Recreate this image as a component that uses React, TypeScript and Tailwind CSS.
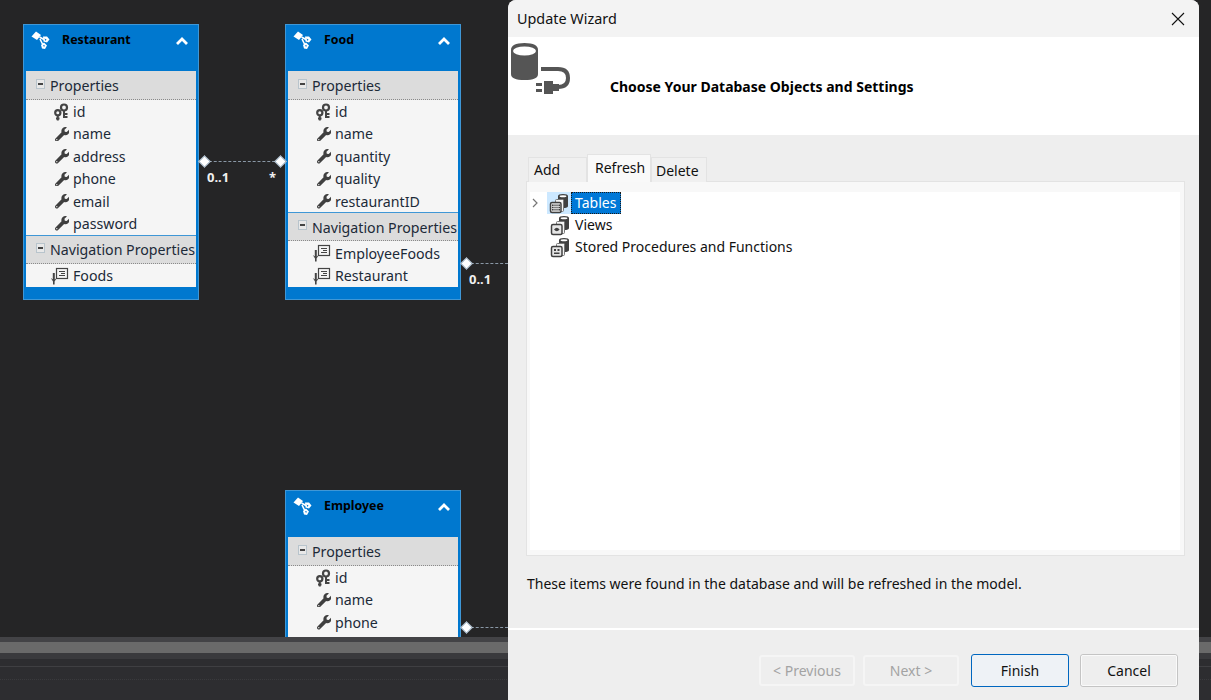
import React from "react";
import { FaWrench } from "react-icons/fa";

const font = { fontFamily: '"Noto Sans", "Open Sans", sans-serif' };

function EntityIcon() {
  return (
    <svg width="20" height="20" viewBox="0 0 20 20" className="shrink-0">
      <path d="M0.5 6.5 L5 1.5 L10 5 L6 10 Z" fill="#fff" />
      <path d="M8.5 7 L13 9.5 M9 9 L12 15" stroke="#fff" strokeWidth="1.6" fill="none" />
      <path d="M12 6.5 L16 6.5 L18.5 9.5 L16 12.5 L12.5 11.5 Z" fill="#fff" />
      <path d="M10 15 L13 12.5 L16 15.5 L14 19 L11 18.5 Z" fill="#fff" />
      <path d="M13.5 8.5 L15.5 9.5 L14.5 11 Z M12 15 L14 15.5 L13 17 Z" fill="#0078cf" />
    </svg>
  );
}

function Chevron() {
  return (
    <svg width="14" height="10" viewBox="0 0 14 10">
      <path d="M2 8 L7 3 L12 8" stroke="#fff" strokeWidth="2.8" fill="none" />
    </svg>
  );
}

function MinusBox() {
  return (
    <svg width="9" height="10" viewBox="0 0 9 10" className="shrink-0">
      <rect x="0.5" y="0.5" width="8" height="9" fill="#e8e8e8" stroke="#b8c4cc" />
      <rect x="2" y="4" width="5" height="2" fill="#444" />
    </svg>
  );
}

function KeyIcon() {
  return (
    <svg width="15" height="18" viewBox="0 0 15 18">
      <circle cx="10" cy="4.5" r="3" stroke="#444" strokeWidth="2.2" fill="none" />
      <path d="M10 8 V15 M10 11 H13.5 M10 14 H13.5" stroke="#444" strokeWidth="2" />
      <circle cx="3.8" cy="9.8" r="2.6" stroke="#444" strokeWidth="2.2" fill="none" />
      <path d="M3.8 12 V17.5 M2 15.5 H5.5" stroke="#444" strokeWidth="2" />
    </svg>
  );
}

function NavIcon() {
  return (
    <svg width="19" height="18" viewBox="0 0 19 18">
      <rect x="6.5" y="1.5" width="11" height="10" fill="#f5f5f5" stroke="#444" strokeWidth="1.2" />
      <path d="M9 4.5 H15 M11 6.5 H15 M9 8.5 H15" stroke="#444" />
      <path d="M3.8 6 V13" stroke="#444" strokeWidth="2" fill="none" />
      <path d="M0.8 11 L3 14.5 L3 17.5 L4.6 17.5 L4.6 14.5 L6.8 11 L3.8 13 Z" fill="#444" />
    </svg>
  );
}

type Row = { name: string; key?: boolean };

function Section({ title, rows, nav, first }: { title: string; rows: Row[]; nav?: boolean; first?: boolean }) {
  return (
    <div className={first ? "" : "border-t border-[#3f97d6]"}>
      <div className={`${first ? "h-[29px]" : "h-[28px]"} bg-[#dcdcdc] border-b border-dotted border-[#8a8a8a] flex items-center pl-[10px] gap-[5px] text-[14.2px] text-[#1c2a38] whitespace-nowrap`}>
        <span className="-mt-[3px] flex"><MinusBox /></span>
        <span className="mt-[1px]">{title}</span>
      </div>
      <div className="pt-[0.5px]">
        {rows.map((r) => (
          <div key={r.name} className="h-[22.4px] flex items-center text-[14.2px] text-[#1c2a38] whitespace-nowrap">
            <span className="w-[47px] flex justify-end pr-[4px] text-[#3f3f3f]">
              {nav ? <NavIcon /> : r.key ? <KeyIcon /> : <FaWrench size={14.5} />}
            </span>
            <span>{r.name}</span>
          </div>
        ))}
      </div>
    </div>
  );
}

function Entity({ name, left, top, sections, height, bodyHeight }: { name: string; left: string; top: string; height: string; bodyHeight?: string; sections: { title: string; rows: Row[]; nav?: boolean }[] }) {
  return (
    <div className={`absolute ${left} ${top} ${height} w-[176px] bg-[#0078cf] border border-[#3f97d6] flex flex-col`}>
      <div className="h-[46px] shrink-0 flex items-start pl-[7px] pr-[9px] pt-[5px]">
        <EntityIcon />
        <span className="ml-[11px] font-bold text-[12.4px] text-black mt-[1px]">{name}</span>
        <span className="ml-auto mt-[6px] flex"><Chevron /></span>
      </div>
      <div className={`mx-[2px] bg-[#f5f5f5] ${bodyHeight ?? ""}`}>
        {sections.map((s, i) => (
          <Section key={s.title} {...s} first={i === 0} />
        ))}
      </div>
    </div>
  );
}

function Diamond({ className }: { className: string }) {
  return <div className={`absolute w-[9px] h-[9px] rotate-45 bg-white border border-[#8fa3b5] ${className}`} />;
}

function DbIcon({ kind }: { kind: "t" | "v" | "s" }) {
  return (
    <svg width="20" height="21" viewBox="0 0 20 21">
      <path d="M9 3 Q9 1 14 1 Q19 1 19 3 V13 Q19 15 14 15 Q9 15 9 13 Z" fill="#404040" />
      <ellipse cx="14" cy="3.2" rx="3.4" ry="1" fill="#fff" />
      <rect x="6.5" y="6.5" width="8" height="12" fill="#f5f5f5" stroke="#777" rx="1" />
      <rect x="1.5" y="9.5" width="10.5" height="10" rx="1.5" fill="#e6e6e6" stroke="#404040" strokeWidth="1.5" />
      {kind === "t" && <path d="M3 11.5 H11 V17.5 H3 Z" fill="#404040" />}
      {kind === "t" && <path d="M3 13.5 H11 M3 15.5 H11 M5 11 V18 M7 11 V18 M9 11 V18" stroke="#e6e6e6" strokeWidth="0.8" />}
      {kind === "v" && <path d="M4 14.5 Q6.8 11 9.6 14.5 Q6.8 18 4 14.5 Z" fill="#404040" />}
      {kind === "s" && <path d="M4 12 H6 V14 H4 Z M7.5 12 H9.5 V14 H7.5 Z M4 15.5 H9.5 V17 H4 Z" fill="#404040" />}
    </svg>
  );
}

function DbPlug() {
  return (
    <svg width="64" height="58" viewBox="0 0 64 58">
      <path d="M3 9 Q3 2 16.5 2 Q30 2 30 9 V33 Q30 39 16.5 39 Q3 39 3 33 Z" fill="#555" />
      <ellipse cx="16.5" cy="10" rx="11.5" ry="4.5" fill="#fff" />
      <path d="M33 28 H50 Q60 28 60 37 Q60 46 50 46 H46" stroke="#555" strokeWidth="4" fill="none" />
      <rect x="36" y="40" width="9" height="13" fill="#555" />
      <rect x="45" y="43" width="6" height="7" fill="#555" />
      <rect x="28" y="42" width="6" height="3" fill="#555" />
      <rect x="28" y="48" width="6" height="3" fill="#555" />
    </svg>
  );
}

function Button({ label, variant }: { label: string; variant: "off" | "primary" | "normal" }) {
  const cls =
    variant === "off"
      ? "w-[96px] h-[31px] border-2 border-[#f5f5f5] text-[#a3a3a3] bg-[#eeeeee]"
      : variant === "primary"
        ? "w-[98px] h-[33px] border border-[#0067c0] text-[#111] bg-[#eef2f6]"
        : "w-[98px] h-[33px] border border-[#c4c4c4] outline outline-1 -outline-offset-2 outline-[#fafafa] text-[#111] bg-[#eeeeee]";
  return <div className={`rounded-[3px] flex items-center justify-center text-[14px] ${cls}`}>{label}</div>;
}

export default function App() {
  return (
    <div style={font} className="relative w-[1211px] h-[700px] overflow-hidden bg-[#252526] flex flex-col">
      <div className="relative h-[637px] shrink-0 overflow-hidden bg-[#252526]">
        <Entity
          name="Restaurant"
          left="left-[23px]"
          top="top-[24px]"
          height="h-[276px]"
          sections={[
            { title: "Properties", rows: [{ name: "id", key: true }, { name: "name" }, { name: "address" }, { name: "phone" }, { name: "email" }, { name: "password" }] },
            { title: "Navigation Properties", nav: true, rows: [{ name: "Foods" }] },
          ]}
        />
        <Entity
          name="Food"
          left="left-[285px]"
          top="top-[24px]"
          height="h-[276px]"
          sections={[
            { title: "Properties", rows: [{ name: "id", key: true }, { name: "name" }, { name: "quantity" }, { name: "quality" }, { name: "restaurantID" }] },
            { title: "Navigation Properties", nav: true, rows: [{ name: "EmployeeFoods" }, { name: "Restaurant" }] },
          ]}
        />
        <Entity
          name="Employee"
          left="left-[285px]"
          top="top-[490px]"
          height="h-[200px]"
          bodyHeight="h-[150px]"
          sections={[{ title: "Properties", rows: [{ name: "id", key: true }, { name: "name" }, { name: "phone" }] }]}
        />

        <div className="absolute left-[204px] top-[161px] w-[76px] border-t border-dashed border-[#8a98a6]" />
        <Diamond className="left-[200px] top-[157px]" />
        <Diamond className="left-[276px] top-[157px]" />
        <span className="absolute left-[207px] top-[168px] text-[13px] font-bold text-[#f0f0f0]">0..1</span>
        <span className="absolute left-[269px] top-[168px] text-[13px] font-bold text-[#f0f0f0]">*</span>

        <div className="absolute left-[466px] top-[263px] w-[42px] border-t border-dashed border-[#8a98a6]" />
        <Diamond className="left-[462px] top-[259px]" />
        <span className="absolute left-[469px] top-[270px] text-[13px] font-bold text-[#f0f0f0]">0..1</span>

        <div className="absolute left-[466px] top-[627px] w-[42px] border-t border-dashed border-[#8a98a6]" />
        <Diamond className="left-[462px] top-[623px]" />
      </div>

      <div className="h-[5px] bg-[#434346] shrink-0" />
      <div className="h-[11px] bg-[#6a6a6a] shrink-0" />
      <div className="h-[6px] bg-[#3a3a3d] shrink-0" />
      <div className="h-[8px] bg-[#2d2d30] border-b border-[#3f3f42] shrink-0" />
      <div className="h-[13px] bg-[#2d2d30] border-b border-dotted border-[#3a3a3d] shrink-0" />
      <div className="flex-1 bg-[#2d2d30]" />

      <div className="absolute left-[508px] top-0 w-[691px] h-[700px] rounded-t-[8px] overflow-hidden bg-[#eeeeee] flex flex-col text-[14px] text-[#111]">
        <div className="h-[37px] shrink-0 bg-[#f3f3f3] flex items-center pl-[9px] pr-[14px] justify-between text-[14.4px]">
          <span>Update Wizard</span>
          <svg width="14" height="14" viewBox="0 0 14 14">
            <path d="M1 1 L13 13 M13 1 L1 13" stroke="#111" strokeWidth="1.1" />
          </svg>
        </div>
        <div className="h-[98px] shrink-0 bg-white relative flex items-center">
          <span className="absolute left-0 top-[4px] flex"><DbPlug /></span>
          <span className="ml-[102px] font-bold text-[14px] text-black">Choose Your Database Objects and Settings</span>
        </div>

        <div className="flex-1 flex flex-col px-[18px] pt-[20px]">
          <div className="flex items-end h-[27px] pl-[2px] -mb-[1px] relative z-10">
            <div className="w-[59px] h-[25px] bg-[#f0f0f0] border border-b-0 border-[#e3e3e3] pl-[5px] pb-[2px] flex items-center">Add</div>
            <div className="w-[64px] h-[28px] bg-[#f9f9f9] border border-b-0 border-[#e3e3e3] pl-[7px] flex items-center pb-[2px]">Refresh</div>
            <div className="w-[56px] h-[25px] bg-[#f0f0f0] border border-b-0 border-[#e3e3e3] pl-[4px] flex items-center">Delete</div>
          </div>
          <div className="w-[659px] h-[375px] bg-[#f8f8f8] border border-[#e3e3e3] pl-[3px] pr-[4px] pt-[10px] pb-[5px]">
            <div className="h-full bg-white">
              <div className="h-[22px] flex items-center">
                <svg width="17" height="12" viewBox="0 0 17 12" className="shrink-0">
                  <path d="M3 2 L7 6 L3 10" stroke="#777" strokeWidth="1.2" fill="none" />
                </svg>
                <div className="h-[22px] w-[24px] bg-[#cce8ff] flex items-center justify-center"><DbIcon kind="t" /></div>
                <div className="h-[22px] w-[50px] bg-[#0078d7] text-white border border-dotted border-[#1a1a1a] flex items-center pl-[3px] pb-[2px]">Tables</div>
              </div>
              <div className="h-[22px] flex items-center pl-[20px]">
                <span className="w-[25px] flex"><DbIcon kind="v" /></span>
                <span className="-mt-[2px]">Views</span>
              </div>
              <div className="h-[22px] flex items-center pl-[20px]">
                <span className="w-[25px] flex"><DbIcon kind="s" /></span>
                <span className="-mt-[2px]">Stored Procedures and Functions</span>
              </div>
            </div>
          </div>
          <div className="mt-[17px] h-[20px] flex items-center pl-[1px]">These items were found in the database and will be refreshed in the model.</div>
        </div>

        <div className="h-[2px] bg-white shrink-0" />
        <div className="h-[70px] shrink-0 flex items-start pt-[24px] pl-[251px] relative">
          <div className="flex items-center h-[33px] gap-[8px]">
            <Button label="< Previous" variant="off" />
            <Button label="Next >" variant="off" />
          </div>
          <div className="flex items-center h-[33px] gap-[11px] ml-[12px]">
            <Button label="Finish" variant="primary" />
            <Button label="Cancel" variant="normal" />
          </div>
        </div>
      </div>
    </div>
  );
}
